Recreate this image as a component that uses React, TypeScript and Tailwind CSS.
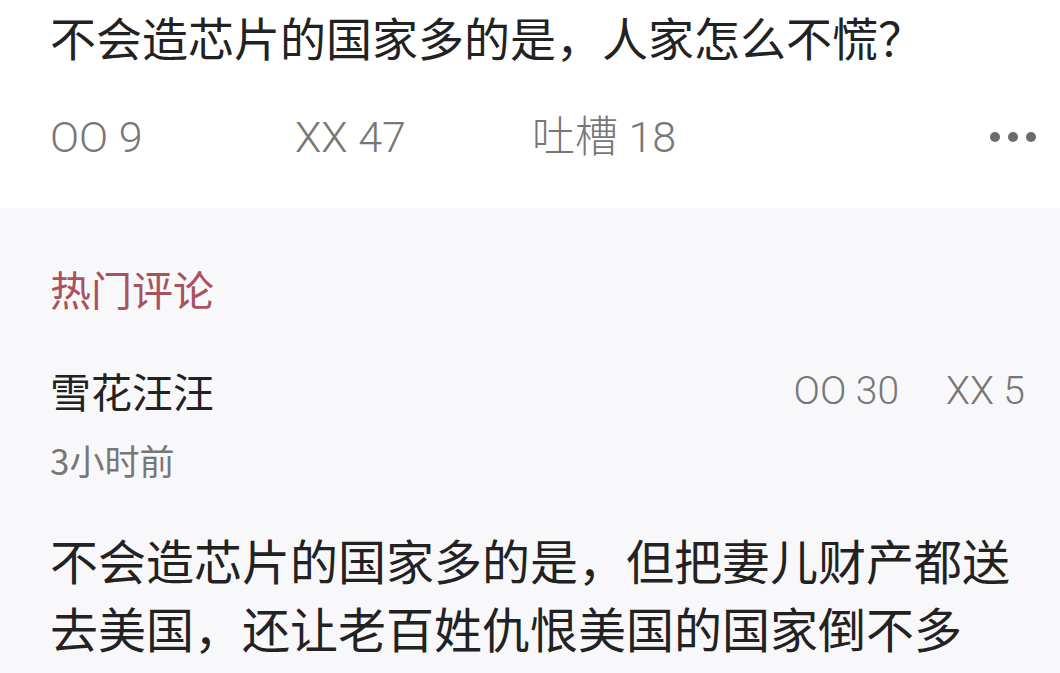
import React from 'react';

const cjk = { fontFamily: '"Noto Sans CJK SC", sans-serif' };
const num = { fontFamily: 'Roboto, "Noto Sans CJK SC", sans-serif' };

function Dots() {
  return (
    <div className="flex items-center gap-[8px]">
      <span className="w-[10px] h-[10px] rounded-full bg-[#6b6b6b]"></span>
      <span className="w-[10px] h-[10px] rounded-full bg-[#6b6b6b]"></span>
      <span className="w-[10px] h-[10px] rounded-full bg-[#6b6b6b]"></span>
    </div>
  );
}

export default function App() {
  return (
    <div className="w-[1060px] h-[673px] overflow-hidden bg-[#f8f8fa]" style={cjk}>
      {/* Post header */}
      <div className="bg-white h-[208px] pl-[50px] pr-[24px]">
        <h1 className="pt-[6px] text-[46px] leading-[60px] text-[#222] font-normal">
          不会造芯片的国家多的是，人家怎么不慌？
        </h1>
        <div className="mt-[40px] flex items-center h-[62px] text-[43px] font-light text-[#777]" style={num}>
          <span className="w-[245px]">OO 9</span>
          <span className="w-[237px]">XX 47</span>
          <span>吐槽 18</span>
          <div className="ml-auto">
            <Dots />
          </div>
        </div>
      </div>

      {/* Hot comments */}
      <div className="pl-[50px] pr-[30px]">
        <div className="pt-[55px] text-[41px] leading-[50px] text-[#a9525c]">热门评论</div>
        <div className="mt-[53px] flex items-center h-[50px]">
          <span className="text-[41px] text-[#222]">雪花汪汪</span>
          <div className="ml-auto mr-[5px] flex items-center text-[39px] font-light text-[#777]" style={num}>
            <span>OO 30</span>
            <span className="ml-[47px]">XX 5</span>
          </div>
        </div>
        <div className="mt-[22px] text-[35px] leading-[44px] text-[#777]">3小时前</div>
        <p className="mt-[43px] text-[48px] leading-[68px] text-[#222]">
          不会造芯片的国家多的是，但把妻儿财产都送去美国，还让老百姓仇恨美国的国家倒不多
        </p>
      </div>
    </div>
  );
}
